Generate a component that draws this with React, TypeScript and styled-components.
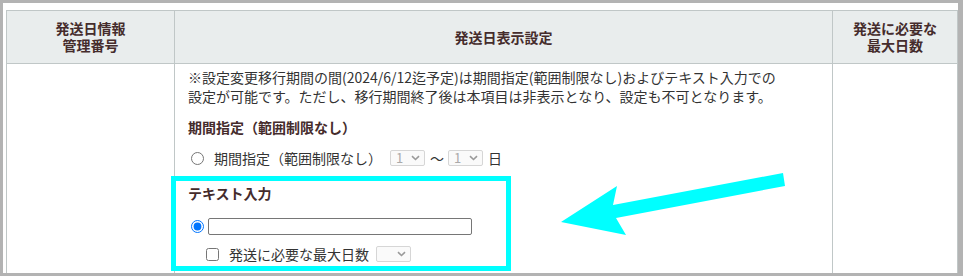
import React from "react";
import styled, { createGlobalStyle } from "styled-components";

const GlobalStyle = createGlobalStyle`
  html, body {
    margin: 0;
    padding: 0;
    background: #fff;
  }
  body {
    font-family: "Noto Sans CJK JP", "Noto Sans", sans-serif;
    color: #333;
  }
`;

const Page = styled.div`
  position: relative;
  width: 963px;
  height: 276px;
  overflow: hidden;
`;

const Frame = styled.div`
  box-sizing: border-box;
  width: 963px;
  height: 276px;
  border: 3px solid #b3b3b3;
  border-right-width: 5px;
  padding: 7px 4px 0 3px;
  overflow: hidden;
  background: #fff;
`;

const Table = styled.table`
  width: 948px;
  border-collapse: collapse;
  table-layout: fixed;
`;

const HeadCell = styled.th<{ width: number }>`
  width: ${(p) => p.width}px;
  height: 52px;
  padding: 0;
  background: #e9eded;
  border: 1px solid #c0c7c7;
  color: #452c2c;
  font-size: 14px;
  font-weight: 700;
  line-height: 17px;
  text-align: center;
  vertical-align: middle;
`;

const HeadLine = styled.span`
  display: block;
  height: 17px;
`;

const BodyCell = styled.td<{ pad?: boolean }>`
  height: 230px;
  padding: ${(p) => (p.pad ? "4px 13px 0" : "0")};
  border: 1px solid #c0c7c7;
  vertical-align: top;
  font-size: 14px;
  line-height: 19px;
`;

const Note = styled.p`
  margin: 0;
  color: #333;
`;

const SectionTitle = styled.div<{ top: number }>`
  margin-top: ${(p) => p.top}px;
  color: #452c2c;
  font-weight: 700;
  line-height: 19px;
`;

const OptionRow = styled.div<{ top: number; indent?: number }>`
  display: flex;
  align-items: center;
  height: 20px;
  margin-top: ${(p) => p.top}px;
  padding-left: ${(p) => p.indent || 0}px;
  color: #333;
  white-space: nowrap;
`;

const Radio = styled.input.attrs({ type: "radio" })<{ gap: number }>`
  width: 13px;
  height: 13px;
  margin: 0 ${(p) => p.gap}px 0 3px;
  flex: none;
`;

const Check = styled.input.attrs({ type: "checkbox" })`
  width: 13px;
  height: 13px;
  margin: 0 10px 0 2px;
  flex: none;
`;

const TextBox = styled.input.attrs({ type: "text" })`
  box-sizing: border-box;
  width: 264px;
  height: 17px;
  margin: 0;
  padding: 0 3px;
  border: 1px solid #767676;
  border-radius: 2px;
  font: inherit;
`;

const FakeSelect = styled.span<{ left: number }>`
  box-sizing: border-box;
  display: inline-flex;
  align-items: center;
  justify-content: space-between;
  width: 35px;
  height: 16px;
  margin-left: ${(p) => p.left}px;
  padding: 0 4px 0 5px;
  border: 1px solid #d6d6d6;
  border-radius: 2px;
  background: #fafafa;
  color: #aaa;
  font-size: 13px;
  line-height: 14px;
`;

const Sep = styled.span`
  margin: 0 4px 0 5px;
  color: #333;
`;

const Unit = styled.span`
  margin-left: 5px;
`;

const Overlay = styled.svg`
  position: absolute;
  left: 0;
  top: 0;
  pointer-events: none;
`;

const Chevron = () => (
  <svg width="9" height="6" viewBox="0 0 9 6">
    <path d="M1 1.2l3.5 3.3L8 1.2" fill="none" stroke="#9a9a9a" strokeWidth="1.6" />
  </svg>
);

const Select = ({ value, left }: { value: string; left: number }) => (
  <FakeSelect left={left}>
    <span>{value}</span>
    <Chevron />
  </FakeSelect>
);

export default function App() {
  return (
    <>
      <GlobalStyle />
      <Page>
        <Frame>
          <Table>
            <thead>
              <tr>
                <HeadCell width={167}>
                  <HeadLine>発送日情報</HeadLine>
                  <HeadLine>管理番号</HeadLine>
                </HeadCell>
                <HeadCell width={657}>発送日表示設定</HeadCell>
                <HeadCell width={124}>
                  <HeadLine>発送に必要な</HeadLine>
                  <HeadLine>最大日数</HeadLine>
                </HeadCell>
              </tr>
            </thead>
            <tbody>
              <tr>
                <BodyCell />
                <BodyCell pad>
                  <Note>
                    ※設定変更移行期間の間(2024/6/12迄予定)は期間指定(範囲制限なし)およびテキスト入力での
                    <br />
                    設定が可能です。ただし、移行期間終了後は本項目は非表示となり、設定も不可となります。
                  </Note>
                  <SectionTitle top={12}>期間指定（範囲制限なし）</SectionTitle>
                  <OptionRow top={11}>
                    <Radio name="mode" gap={10} />
                    期間指定（範囲制限なし）
                    <Select value="1" left={8} />
                    <Sep>〜</Sep>
                    <Select value="1" left={0} />
                    <Unit>日</Unit>
                  </OptionRow>
                  <SectionTitle top={16}>テキスト入力</SectionTitle>
                  <OptionRow top={13}>
                    <Radio name="mode" gap={4} defaultChecked />
                    <TextBox />
                  </OptionRow>
                  <OptionRow top={8} indent={16}>
                    <Check />
                    発送に必要な最大日数
                    <Select value="" left={7} />
                  </OptionRow>
                </BodyCell>
                <BodyCell />
              </tr>
            </tbody>
          </Table>
        </Frame>
        <Overlay width="963" height="276" viewBox="0 0 963 276">
          <rect x="173.5" y="178.5" width="335" height="90" fill="none" stroke="#00ffff" strokeWidth="5" />
          <polygon
            points="561,222 617,186 613,205 783,173 785,186 616,218 626,235"
            fill="#00ffff"
          />
        </Overlay>
      </Page>
    </>
  );
}
